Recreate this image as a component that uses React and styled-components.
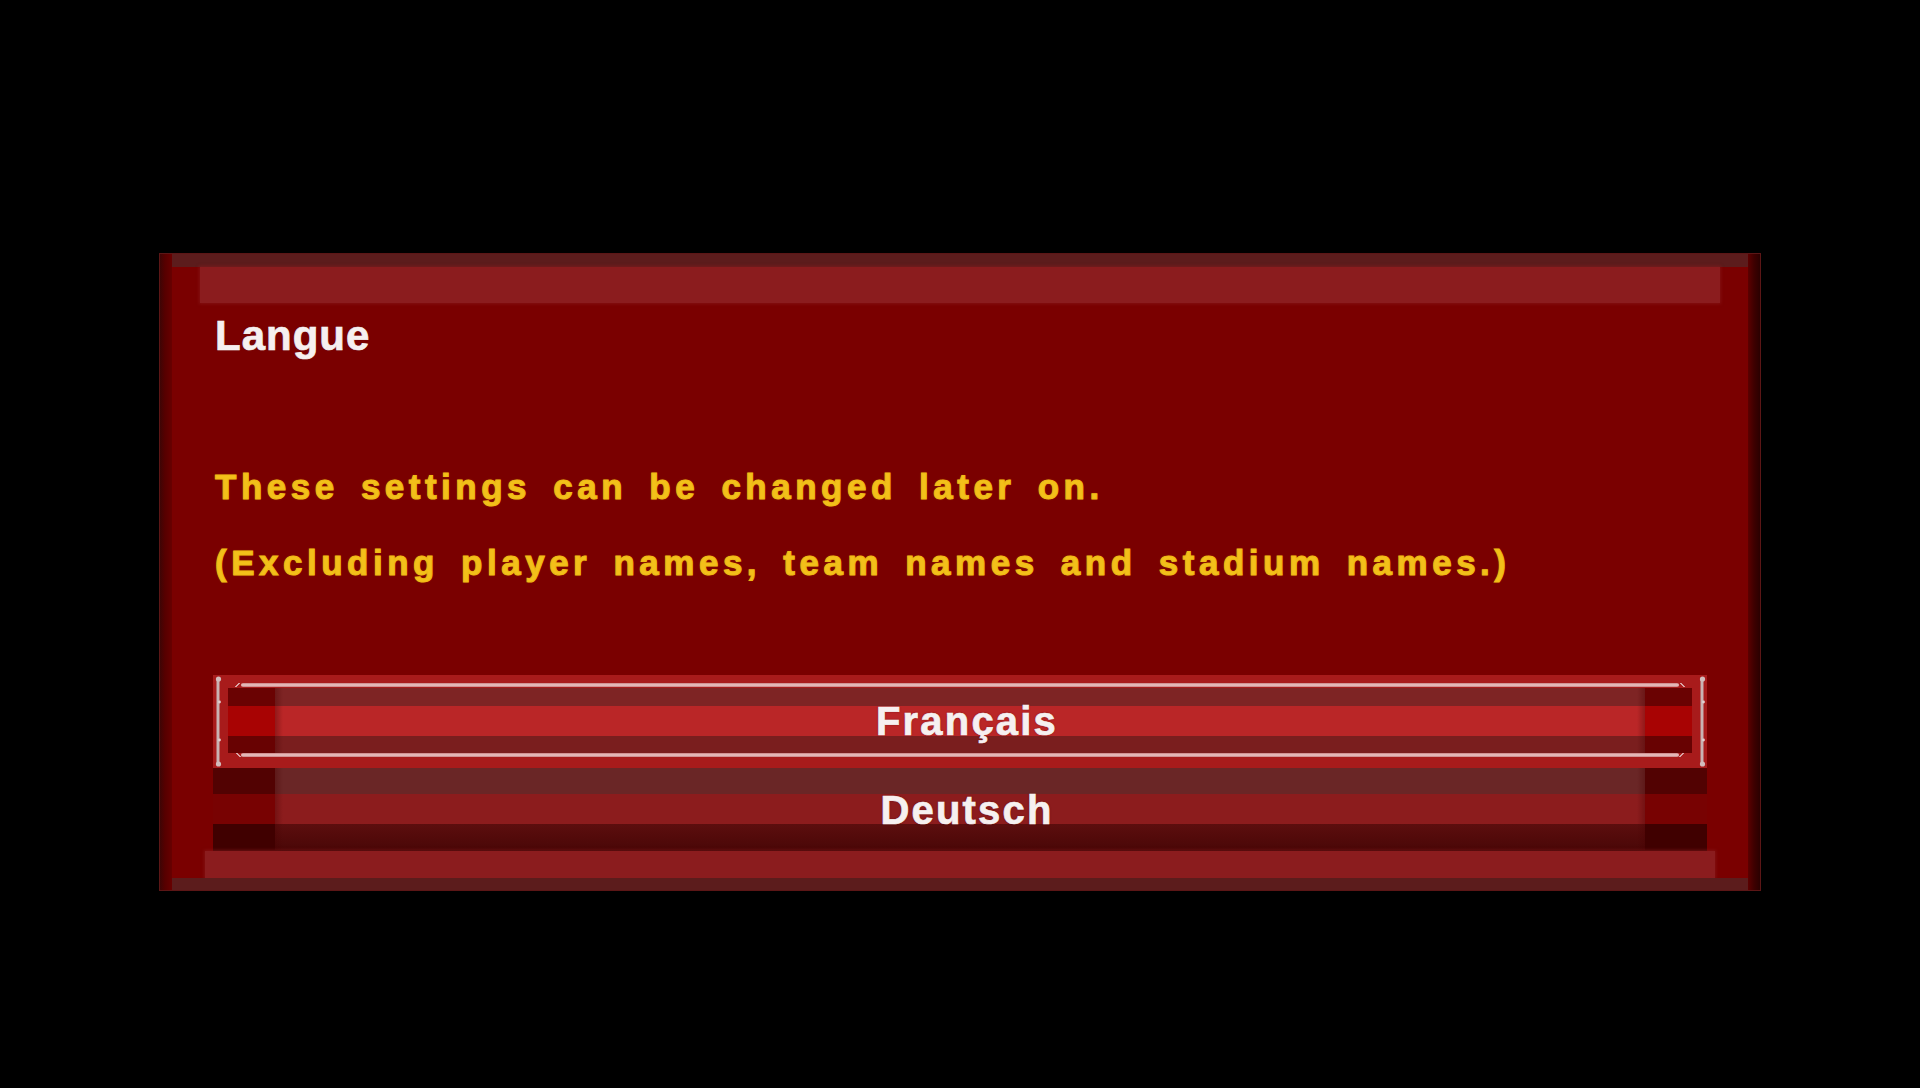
import React from "react";
import styled, { createGlobalStyle } from "styled-components";

const GlobalStyle = createGlobalStyle`
  html, body {
    margin: 0;
    padding: 0;
    background: #000;
  }
  #root {
    min-height: 1088px;
    background: #000;
  }
  * { box-sizing: border-box; }
`;

const Page = styled.div`
  min-height: 1088px;
  padding-top: 253px;
  background: #000;
  font-family: "Liberation Sans", Arial, sans-serif;
`;

const Frame = styled.section`
  width: 1602px;
  margin: 0 auto;
  display: flex;
  border: 1px solid #5c1616;
  background: #7a0000;
`;

const Edge = styled.div`
  width: 12px;
  flex: none;
  background: ${(p) =>
    p.$side === "left"
      ? "linear-gradient(90deg, #3e0505 0%, #560000 40%, #680000 100%)"
      : "linear-gradient(90deg, #5c0000 0%, #3e0000 50%, #2a0000 100%)"};
`;

const Surface = styled.div`
  flex: 1;
  display: flex;
  flex-direction: column;
  background: #7a0000;
`;

const Strip = styled.div`
  height: ${(p) => p.$h}px;
  background: #5c1c1c;
`;

const Band = styled.div`
  height: ${(p) => p.$h}px;
  margin: 0 ${(p) => p.$inset}px;
  background: #8b1c1e;
  box-shadow: 0 0 3px 1px rgba(139, 28, 30, 0.6);
`;

const Content = styled.div`
  display: flex;
  flex-direction: column;
  padding: 0 41px;
`;

const Title = styled.h1`
  margin: 11px 0 0 2px;
  font-family: "Liberation Sans", Arial, sans-serif;
  font-weight: 700;
  font-size: 42px;
  line-height: 43px;
  letter-spacing: 1px;
  color: #f6f0f0;
  -webkit-text-stroke: 0.7px #f6f0f0;
  text-shadow: 0 0 2px rgba(110, 30, 30, 0.9);
`;

const Message = styled.div`
  margin: 92px 0 0 2px;
  display: flex;
  flex-direction: column;
`;

const MessageLine = styled.p`
  margin: 0;
  font-family: "Liberation Sans", Arial, sans-serif;
  font-weight: 700;
  font-size: 35px;
  line-height: 76px;
  letter-spacing: 4.5px;
  word-spacing: 8px;
  color: #f3c01a;
  -webkit-text-stroke: 1px #f0bb16;
  text-shadow: 0 0 2px rgba(170, 80, 0, 0.95);
  white-space: nowrap;
`;

const ButtonList = styled.div`
  margin-top: 74px;
  display: flex;
  flex-direction: column;
`;

const Label = styled.span`
  font-family: "Liberation Sans", Arial, sans-serif;
  font-weight: 700;
  font-size: 40px;
  line-height: 40px;
  letter-spacing: 2.2px;
  padding-left: 14px;
  color: #f6f0f0;
  -webkit-text-stroke: 0.7px #f6f0f0;
  text-shadow: 0 0 2px rgba(70, 0, 0, 0.7);
`;

const SelectedButton = styled.div`
  height: 93px;
  display: flex;
  align-items: stretch;
  padding: 0 1px;
  background: #a81b1b;
`;

const BracketSvg = styled.svg`
  width: 8px;
  flex: none;
  display: block;
`;

const SelectedBody = styled.div`
  flex: 1;
  display: flex;
  flex-direction: column;
  margin: 0 6px;
  padding: 8px 0 11px;
`;

const HighlightRow = styled.div`
  height: 4px;
  display: flex;
  align-items: stretch;
  margin: ${(p) => (p.$top ? "0 7px 1px 7px" : "0 7px 0 7px")};
`;

const Hook = styled.div`
  width: 6px;
  flex: none;
  background: linear-gradient(
    ${(p) => (p.$flip ? "45deg" : "-45deg")},
    transparent 40%,
    #d9a6a6 45%,
    #d9a6a6 60%,
    transparent 65%
  );
`;

const Highlight = styled.div`
  flex: 1;
  border-radius: 2px;
  background: linear-gradient(180deg, #c98282 0%, #ecc8c8 50%, #c98282 100%);
`;

const capLayers = (w, top, mid, bot, t1, t2) => `
  linear-gradient(90deg, rgba(0,0,0,0) 0, rgba(0,0,0,0) ${w}px, rgba(70,0,0,0.35) ${w}px, rgba(70,0,0,0) ${w + 8}px) left top / ${w + 8}px 100% no-repeat,
  linear-gradient(270deg, rgba(0,0,0,0) 0, rgba(0,0,0,0) ${w}px, rgba(70,0,0,0.35) ${w}px, rgba(70,0,0,0) ${w + 8}px) right top / ${w + 8}px 100% no-repeat,
  linear-gradient(180deg, ${top} 0, ${top} ${t1}px, ${mid} ${t1}px, ${mid} ${t2}px, ${bot} ${t2}px, ${bot} 100%) left top / ${w}px 100% no-repeat,
  linear-gradient(180deg, ${top} 0, ${top} ${t1}px, ${mid} ${t1}px, ${mid} ${t2}px, ${bot} ${t2}px, ${bot} 100%) right top / ${w}px 100% no-repeat
`;

const SelectedStripes = styled.div`
  flex: 1;
  display: flex;
  align-items: center;
  justify-content: center;
  background:
    ${capLayers(47, "#6a0202", "#a80303", "#680202", 18, 48)},
    linear-gradient(180deg, #7e2424 0, #7e2424 18px, #ba2627 18px, #ba2627 48px, #7a1e1e 48px, #7a1e1e 100%);
`;

const PlainButton = styled.div`
  height: 83px;
  display: flex;
  align-items: center;
  justify-content: center;
  background:
    ${capLayers(62, "#520202", "#780202", "#400000", 26, 56)},
    linear-gradient(180deg, #6a2626 0, #6a2626 26px, #8c1c1d 26px, #8c1c1d 56px, #5c0e0e 56px, #4a0707 82px, #2a0000 83px);
`;

function Bracket() {
  return (
    <BracketSvg viewBox="0 0 8 93" preserveAspectRatio="none" aria-hidden="true">
      <line x1="4" y1="4" x2="4" y2="89" stroke="#c9b3b3" strokeWidth="3" />
      <circle cx="4.5" cy="4" r="2.6" fill="#d2bcbc" />
      <circle cx="4.5" cy="89" r="2.6" fill="#d2bcbc" />
      <circle cx="5.5" cy="27" r="1.4" fill="#e2d0d0" />
      <circle cx="5.5" cy="65" r="1.4" fill="#e2d0d0" />
    </BracketSvg>
  );
}

function HighlightLine({ top }) {
  return (
    <HighlightRow $top={top}>
      <Hook $flip={!top} />
      <Highlight />
      <Hook $flip={top} />
    </HighlightRow>
  );
}

function LanguageButton({ label, selected }) {
  if (selected) {
    return (
      <SelectedButton>
        <Bracket />
        <SelectedBody>
          <HighlightLine top />
          <SelectedStripes>
            <Label>{label}</Label>
          </SelectedStripes>
          <HighlightLine />
        </SelectedBody>
        <Bracket />
      </SelectedButton>
    );
  }
  return (
    <PlainButton>
      <Label>{label}</Label>
    </PlainButton>
  );
}

export default function App() {
  const languages = [
    { label: "Français", selected: true },
    { label: "Deutsch", selected: false },
  ];
  return (
    <>
      <GlobalStyle />
      <Page>
        <Frame>
          <Edge $side="left" />
          <Surface>
            <Strip $h={13} />
            <Band $h={36} $inset={28} />
            <Content>
              <Title>Langue</Title>
              <Message>
                <MessageLine>These settings can be changed later on.</MessageLine>
                <MessageLine>(Excluding player names, team names and stadium names.)</MessageLine>
              </Message>
              <ButtonList>
                {languages.map((l) => (
                  <LanguageButton key={l.label} label={l.label} selected={l.selected} />
                ))}
              </ButtonList>
            </Content>
            <Band $h={27} $inset={33} />
            <Strip $h={12} />
          </Surface>
          <Edge $side="right" />
        </Frame>
      </Page>
    </>
  );
}
